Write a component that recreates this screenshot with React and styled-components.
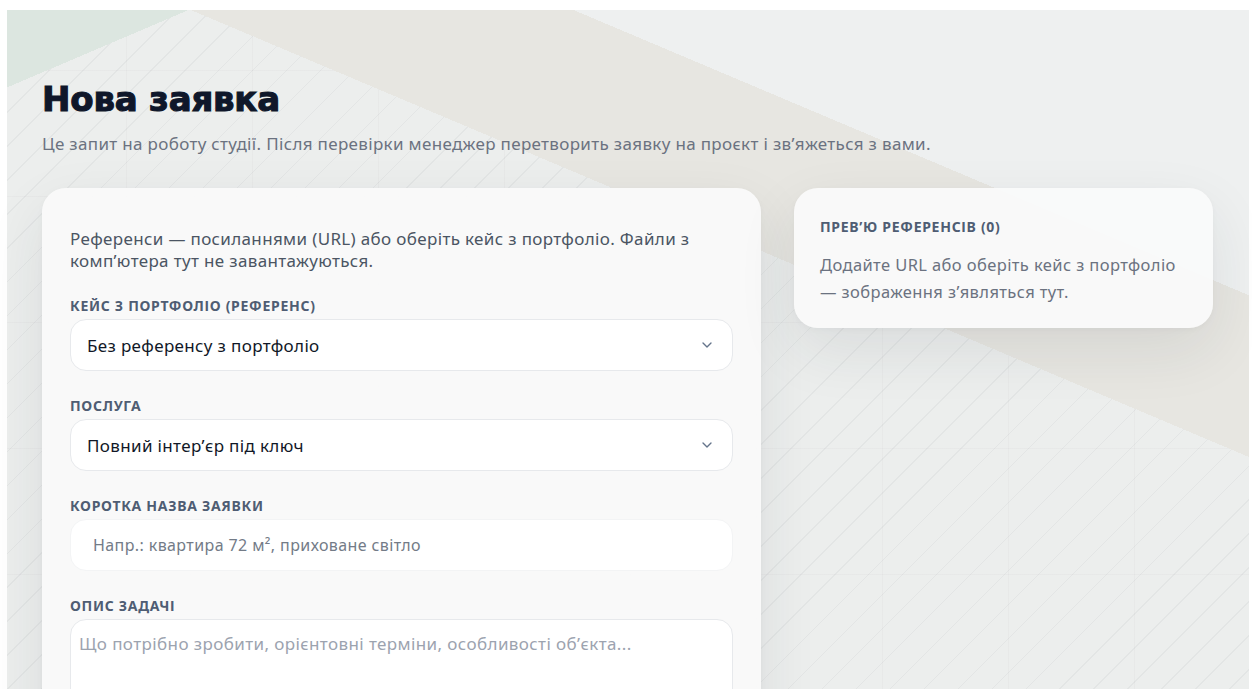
import React from 'react';
import styled, { createGlobalStyle } from 'styled-components';
import { ChevronDown } from 'lucide-react';

const GlobalStyle = createGlobalStyle`
  * {
    box-sizing: border-box;
  }

  html,
  body {
    margin: 0;
  }

  body {
    padding: 10px 3px 0 7px;
    background: #ffffff;
    font-family: "Noto Sans", "Open Sans", sans-serif;
    color: #111827;
  }
`;

// Soft diagonal planes, hairline stripes and a faint grid behind everything
const Page = styled.main`
  min-height: 679px;
  padding: 70px 36px 40px 35px;
  background-color: #eceeed;
  background-image:
    linear-gradient(156.9deg, #dce6e0 0 6.3%, transparent 6.3%),
    linear-gradient(202.9deg, #eef0f0 0 23.3%, #e7e6e1 23.3% 36.5%, transparent 36.5%),
    repeating-linear-gradient(135deg, rgba(60, 70, 80, 0.05) 0 1px, transparent 1px 24px),
    linear-gradient(to right, rgba(60, 70, 80, 0.028) 1px, transparent 1px),
    linear-gradient(to bottom, rgba(60, 70, 80, 0.028) 1px, transparent 1px);
  background-size: 1242px 700px, 1242px 700px, auto, 126px 126px, 126px 126px;
  background-position: 0 0, 0 0, 0 0, 119px 60px, 119px 60px;
  background-repeat: no-repeat, no-repeat, repeat, repeat, repeat;
`;

const Header = styled.header`
  margin-bottom: 33px;
`;

const Title = styled.h1`
  margin: 0 0 15px;
  font-family: "DejaVu Sans", Inter, sans-serif;
  font-size: 34px;
  font-weight: 700;
  line-height: 38px;
  letter-spacing: -0.2px;
  -webkit-text-stroke: 1.1px #0f172a;
  color: #0f172a;
`;

const Lead = styled.p`
  margin: 0;
  font-size: 17px;
  line-height: 22px;
  letter-spacing: 0.33px;
  color: #6b7280;
`;

const Layout = styled.div`
  display: grid;
  grid-template-columns: minmax(0, 1fr) 419px;
  gap: 33px;
  align-items: start;
`;

const Card = styled.section`
  background: rgba(250, 250, 250, 0.94);
  border-radius: 24px;
  box-shadow: 0 22px 60px rgba(30, 41, 59, 0.09), 0 2px 6px rgba(30, 41, 59, 0.03);
  padding: ${p => p.$pad};
`;

const Intro = styled.p`
  margin: 0 0 25px;
  font-size: 17px;
  line-height: 22px;
  letter-spacing: 0.35px;
  color: #4b5563;
`;

const Field = styled.div`
  display: flex;
  flex-direction: column;
  gap: 4px;

  & + & {
    margin-top: 26px;
  }
`;

const Label = styled.label`
  font-size: 14px;
  font-weight: 700;
  line-height: 18px;
  letter-spacing: 0.7px;
  text-transform: uppercase;
  color: #4f5d73;
`;

const SelectWrap = styled.div`
  position: relative;
`;

const Select = styled.select`
  appearance: none;
  width: 100%;
  height: 52px;
  padding: 0 44px 0 16px;
  border: 1px solid #e7e9ec;
  border-radius: 16px;
  background: #ffffff;
  font: inherit;
  font-size: 17px;
  letter-spacing: 0.35px;
  color: #111827;
  outline: none;
`;

const Chevron = styled(ChevronDown)`
  position: absolute;
  right: 18px;
  top: 50%;
  transform: translateY(-50%);
  color: #64748b;
  pointer-events: none;
`;

const Input = styled.input`
  width: 100%;
  height: 52px;
  padding: 0 22px;
  border: 1px solid #f3f4f5;
  border-radius: 16px;
  background: #ffffff;
  font: inherit;
  font-size: 16px;
  letter-spacing: 0.4px;
  color: #111827;
  outline: none;

  &::placeholder {
    color: #737b87;
  }
`;

const TextArea = styled.textarea`
  width: 100%;
  height: 120px;
  padding: 13px 8px;
  border: 1px solid #e7e9ec;
  border-radius: 16px;
  background: #ffffff;
  font: inherit;
  font-size: 17px;
  line-height: 22px;
  letter-spacing: 0.4px;
  color: #111827;
  resize: vertical;
  outline: none;

  &::placeholder {
    color: #9ca3af;
  }
`;

const PreviewTitle = styled.h3`
  margin: 0 0 15px;
  font-size: 14px;
  font-weight: 700;
  line-height: 18px;
  letter-spacing: 0.7px;
  text-transform: uppercase;
  color: #4f5d73;
`;

const PreviewText = styled.p`
  margin: 0;
  font-size: 16.5px;
  line-height: 27px;
  letter-spacing: 0.4px;
  color: #6b7280;
`;

const portfolioOptions = ['Без референсу з портфоліо'];
const serviceOptions = ['Повний інтер’єр під ключ'];

function SelectField({ id, label, options }) {
  return (
    <Field>
      <Label htmlFor={id}>{label}</Label>
      <SelectWrap>
        <Select id={id} defaultValue={options[0]}>
          {options.map(o => (
            <option key={o}>{o}</option>
          ))}
        </Select>
        <Chevron size={16} strokeWidth={2} />
      </SelectWrap>
    </Field>
  );
}

export default function App() {
  return (
    <>
      <GlobalStyle />
      <Page>
        <Header>
          <Title>Нова заявка</Title>
          <Lead>
            Це запит на роботу студії. Після перевірки менеджер перетворить заявку на проєкт і зв’яжеться з вами.
          </Lead>
        </Header>

        <Layout>
          <Card $pad="40px 28px 40px">
            <Intro>
              Референси — посиланнями (URL) або оберіть кейс з портфоліо. Файли з комп’ютера тут не завантажуються.
            </Intro>

            <SelectField id="portfolio" label="Кейс з портфоліо (референс)" options={portfolioOptions} />
            <SelectField id="service" label="Послуга" options={serviceOptions} />

            <Field>
              <Label htmlFor="title">Коротка назва заявки</Label>
              <Input id="title" placeholder="Напр.: квартира 72 м², приховане світло" />
            </Field>

            <Field>
              <Label htmlFor="details">Опис задачі</Label>
              <TextArea id="details" placeholder="Що потрібно зробити, орієнтовні терміни, особливості об’єкта..." />
            </Field>
          </Card>

          <Card $pad="30px 26px 23px">
            <PreviewTitle>Прев’ю референсів (0)</PreviewTitle>
            <PreviewText>Додайте URL або оберіть кейс з портфоліо — зображення з’являться тут.</PreviewText>
          </Card>
        </Layout>
      </Page>
    </>
  );
}
